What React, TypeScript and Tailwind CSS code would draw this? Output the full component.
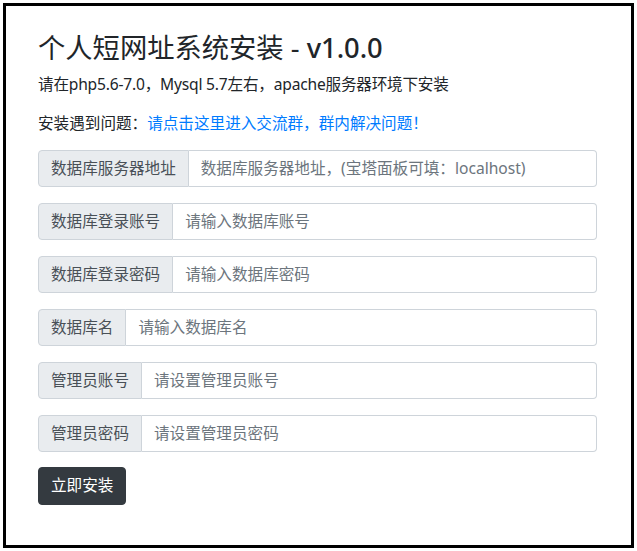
const fields = [
  { label: "数据库服务器地址", placeholder: "数据库服务器地址，(宝塔面板可填：localhost)" },
  { label: "数据库登录账号", placeholder: "请输入数据库账号" },
  { label: "数据库登录密码", placeholder: "请输入数据库密码" },
  { label: "数据库名", placeholder: "请输入数据库名" },
  { label: "管理员账号", placeholder: "请设置管理员账号" },
  { label: "管理员密码", placeholder: "请设置管理员密码" },
];

export default function App() {
  return (
    <div
      className="w-[637px] h-[551px] bg-white p-[3px]"
      style={{ fontFamily: '"Noto Sans", "Noto Sans CJK SC", sans-serif' }}
    >
      <div className="h-[545px] border-[3px] border-black bg-white pl-8 pr-[34px] pt-[26px]">
        {/* 标题 */}
        <h3 className="text-[27.3px] leading-[1.2] font-normal text-[#212529] mb-2">
          个人短网址系统安装 - <span className="font-medium">v1.0.0</span>
        </h3>
        <p className="text-[15.6px] tracking-[-0.2px] leading-[1.45] text-[#212529]">
          请在php5.6-7.0，Mysql 5.7左右，apache服务器环境下安装
        </p>
        <p className="text-[15.6px] leading-[1.45] text-[#212529] mt-[17px]">
          安装遇到问题：<a href="#" className="text-[#007bff]">请点击这里进入交流群，群内解决问题！</a>
        </p>

        {/* 表单 */}
        <form className="mt-[15px] flex flex-col gap-4">
          {fields.map((f) => (
            <div key={f.label} className="flex h-[37px] w-full">
              <span className="flex items-center px-3 bg-[#e9ecef] border border-[#ced4da] rounded-l-[4px] text-[15.6px] text-[#495057] whitespace-nowrap">
                {f.label}
              </span>
              <input
                className="flex-1 min-w-0 px-3 border border-l-0 border-[#ced4da] rounded-r-[4px] text-[15.6px] text-[#495057] placeholder:text-[#6c757d] outline-none"
                placeholder={f.placeholder}
              />
            </div>
          ))}
          <div className="-mt-px">
            <button
              type="button"
              className="h-[38px] px-3 bg-[#343a40] border border-[#343a40] rounded-[4px] text-white text-[15.6px]"
            >
              立即安装
            </button>
          </div>
        </form>
      </div>
    </div>
  );
}
